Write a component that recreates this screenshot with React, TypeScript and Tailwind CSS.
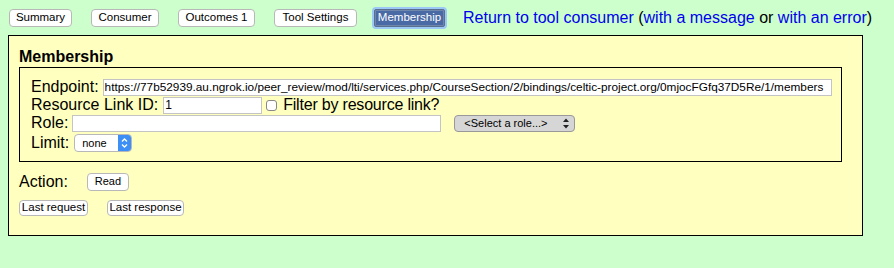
import React from "react";

const font = { fontFamily: '"Liberation Sans", Arial, sans-serif' };

function Tab({ label, width }: { label: string; width: string }) {
  return (
    <button
      className={`${width} h-[18px] bg-white border border-[#b8b8b8] rounded-[4px] text-[11.5px] leading-none text-black text-center`}
    >
      {label}
    </button>
  );
}

export default function App() {
  return (
    <div className="min-h-screen bg-[#ccffcc] pt-[7px] pl-[8px] text-black" style={font}>
      {/* tabs */}
      <div className="flex items-center h-[22px]">
        <div className="ml-[1px] flex items-center gap-[19px]">
          <Tab label="Summary" width="w-[63px]" />
          <Tab label="Consumer" width="w-[68px]" />
          <Tab label="Outcomes 1" width="w-[77px]" />
          <Tab label="Tool Settings" width="w-[83px]" />
        </div>
        <div className="ml-[15px] w-[75px] h-[22px] rounded-[4px] bg-[#9cc8f5] p-[2px]">
          <div className="h-full rounded-[2px] bg-[#6f87ab] border border-[#5a6f8f] flex items-center justify-center">
            <span className="text-[11.5px] leading-none text-white bg-[#4a6aa5] px-[2px] py-[1px]">Membership</span>
          </div>
        </div>
        <div className="ml-[16px] text-[16px] leading-none">
          <a className="text-[#0000ee]">Return to tool consumer</a> (
          <a className="text-[#0000ee]">with a message</a> or{" "}
          <a className="text-[#0000ee]">with an error</a>)
        </div>
      </div>

      {/* panel */}
      <div className="mt-[6px] w-[855px] h-[201px] border border-black bg-[#ffffc0] pl-[10px] pt-[11px]">
        <h2 className="text-[16px] leading-[19px] font-bold">Membership</h2>
        <div className="mt-[1px] w-[823px] h-[95px] border border-black pl-[11px] pt-[10px] text-[16px] leading-[18px]">
          <div className="flex items-center h-[18px]">
            <span>Endpoint:</span>
            <input
              readOnly
              value="https://77b52939.au.ngrok.io/peer_review/mod/lti/services.php/CourseSection/2/bindings/celtic-project.org/0mjocFGfq37D5Re/1/members"
              className="ml-[4px] w-[729px] h-[17px] bg-white border border-[#c4c4c4] px-[1px] text-[11.8px] outline-none"
            />
          </div>
          <div className="flex items-center h-[18px]">
            <span>Resource Link ID:</span>
            <input
              readOnly
              value="1"
              className="ml-[5px] w-[99px] h-[17px] bg-white border border-[#c4c4c4] px-[1px] text-[12px] outline-none"
            />
            <span className="ml-[4px] w-[11px] h-[11px] rounded-[3px] border border-[#888] bg-white"></span>
            <span className="ml-[6px] tracking-[-0.2px]">Filter by resource link?</span>
          </div>
          <div className="flex items-center h-[18px]">
            <span>Role:</span>
            <input
              readOnly
              value=""
              className="ml-[4px] w-[369px] h-[17px] bg-white border border-[#c4c4c4] outline-none"
            />
            <div className="ml-[13px] w-[121px] h-[17px] rounded-[4px] border border-[#999] bg-[#d6d6d6] flex items-center justify-between pl-[9px] pr-[5px] text-[11px]">
              <span>&lt;Select a role...&gt;</span>
              <svg width="6" height="11" viewBox="0 0 6 11">
                <path d="M0 4 L3 0.5 L6 4 Z M0 7 L3 10.5 L6 7 Z" fill="#222" />
              </svg>
            </div>
          </div>
          <div className="flex items-center h-[19px] mt-[1px]">
            <span>Limit:</span>
            <div className="ml-[5px] w-[58px] h-[18px] rounded-[4px] border border-[#b8b8b8] bg-white flex items-stretch overflow-hidden text-[11px]">
              <span className="flex-1 flex items-center pl-[7px]">none</span>
              <span className="w-[13px] bg-[#3d8ff5] flex items-center justify-center">
                <svg width="7" height="10" viewBox="0 0 7 10">
                  <path d="M1 3.5 L3.5 1 L6 3.5 M1 6.5 L3.5 9 L6 6.5" stroke="white" strokeWidth="1.3" fill="none" />
                </svg>
              </span>
            </div>
          </div>
        </div>

        <div className="mt-[10px] flex items-center h-[19px]">
          <span className="text-[16px] leading-none">Action:</span>
          <button className="ml-[19px] w-[42px] h-[18px] bg-white border border-[#b8b8b8] rounded-[4px] text-[11px] leading-none">
            Read
          </button>
        </div>
        <div className="mt-[9px] flex items-center gap-[19px]">
          <button className="w-[69px] h-[16px] bg-white border border-[#b8b8b8] rounded-[4px] text-[11.5px] leading-none">
            Last request
          </button>
          <button className="w-[77px] h-[16px] bg-white border border-[#b8b8b8] rounded-[4px] text-[11.5px] leading-none">
            Last response
          </button>
        </div>
      </div>
    </div>
  );
}
